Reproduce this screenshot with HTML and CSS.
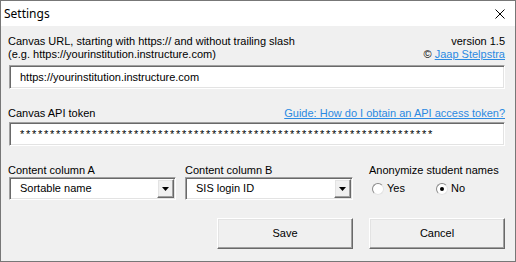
FILE: index.html
```html
<!doctype html>
<html>
<head>
  <meta charset="utf-8">
  <title>Settings</title>
  <link rel="stylesheet" href="styles.css">
</head>
<body>
  <div class="window">
    <div class="titlebar">
      <span class="title">Settings</span>
      <svg class="close" width="10" height="10" viewBox="0 0 10 10">
        <path d="M0.5 0.5 L9.5 9.5 M9.5 0.5 L0.5 9.5" stroke="#000" stroke-width="1" fill="none"/>
      </svg>
    </div>

    <div class="client">
      <!-- Canvas URL -->
      <div class="head">
        <div>Canvas URL, starting with https:// and without trailing slash<br>(e.g. https://yourinstitution.instructure.com)</div>
        <div class="right">version 1.5<br>© <a class="link" href="#">Jaap Stelpstra</a></div>
      </div>
      <div class="field url">https://yourinstitution.instructure.com</div>

      <!-- API token -->
      <div class="head token-head">
        <span>Canvas API token</span>
        <a class="link" href="#">Guide: How do I obtain an API access token?</a>
      </div>
      <div class="field token">*********************************************************************</div>

      <!-- Options -->
      <div class="options">
        <div class="col col-a">
          <div class="label">Content column A</div>
          <div class="combo"><span>Sortable name</span><span class="drop"><svg width="7" height="4" viewBox="0 0 7 4"><polygon points="0,0 7,0 3.5,4" fill="#000"/></svg></span></div>
        </div>
        <div class="col col-b">
          <div class="label">Content column B</div>
          <div class="combo"><span>SIS login ID</span><span class="drop"><svg width="7" height="4" viewBox="0 0 7 4"><polygon points="0,0 7,0 3.5,4" fill="#000"/></svg></span></div>
        </div>
        <div class="col anon">
          <div class="label">Anonymize student names</div>
          <div class="radios">
            <label class="radio"><span class="circle"></span>Yes</label>
            <label class="radio"><span class="circle checked"></span>No</label>
          </div>
        </div>
      </div>

      <div class="buttons">
        <button class="btn">Save</button>
        <button class="btn">Cancel</button>
      </div>
    </div>
  </div>
</body>
</html>
```

FILE: styles.css
```css
body {
  margin: 0;
  background: #fff;
}
.window {
  width: 516px;
  height: 262px;
  box-sizing: border-box;
  border: 1px solid #777;
  background: #f0f0f0;
  display: flex;
  flex-direction: column;
  font: 11px/13px "Liberation Sans", Arial, sans-serif;
  color: #000;
}
.titlebar {
  height: 25px;
  flex: none;
  background: #fff;
  display: flex;
  align-items: center;
  justify-content: space-between;
  padding: 0 10px 0 3px;
}
.title {
  font: 12px/16px "Noto Sans", sans-serif;
}
.close {
  display: block;
}
.client {
  flex: 1;
  padding: 9px 10px 0 7px;
  display: flex;
  flex-direction: column;
}
.head {
  display: flex;
  justify-content: space-between;
  align-items: flex-start;
}
.right {
  text-align: right;
}
.link {
  color: #2b8ae2;
  text-decoration: underline;
}
.field {
  margin: 4px 0 0 1px;
  height: 24px;
  box-sizing: border-box;
  background: #fff;
  border: 1px solid;
  border-color: #a0a0a0 #fff #fff #a0a0a0;
  box-shadow: inset 1px 1px #696969, inset -1px -1px #e3e3e3;
  padding: 0 10px;
  display: flex;
  align-items: center;
  white-space: nowrap;
  overflow: hidden;
}
.token-head {
  margin-top: 18px;
}
.token {
  margin-top: 2px;
  letter-spacing: 1.72px;
}
.options {
  display: flex;
  margin-top: 18px;
}
.col-a {
  width: 168px;
}
.col-b {
  width: 168px;
  margin-left: 9px;
}
.anon {
  margin-left: 16px;
}
.combo {
  height: 23px;
  box-sizing: border-box;
  background: #fff;
  border: 1px solid;
  border-color: #a0a0a0 #fff #fff #a0a0a0;
  box-shadow: inset 1px 1px #696969, inset -1px -1px #e3e3e3;
  padding: 1px 1px 1px 10px;
  display: flex;
  align-items: center;
  justify-content: space-between;
}
.col-a .combo {
  margin-left: 1px;
}
.drop {
  width: 17px;
  height: 19px;
  box-sizing: border-box;
  background: #f0f0f0;
  border: 1px solid;
  border-color: #fff #696969 #696969 #fff;
  box-shadow: inset -1px -1px #a0a0a0, inset 1px 1px #e3e3e3;
  display: flex;
  align-items: center;
  justify-content: center;
}
.drop svg {
  display: block;
}
.radios {
  display: flex;
  align-items: center;
  height: 23px;
  margin-left: 3px;
}
.radio {
  width: 64px;
  display: flex;
  align-items: center;
  gap: 3px;
}
.circle {
  width: 12px;
  height: 12px;
  box-sizing: border-box;
  border-radius: 50%;
  background: #fff;
  border: 1px solid;
  border-color: #8a8a8a #e3e3e3 #e3e3e3 #8a8a8a;
  display: flex;
  align-items: center;
  justify-content: center;
}
.circle.checked::after {
  content: "";
  width: 4px;
  height: 4px;
  border-radius: 50%;
  background: #000;
}
.buttons {
  display: flex;
  justify-content: flex-end;
  gap: 16px;
  margin-top: 18px;
}
.btn {
  width: 136px;
  height: 31px;
  box-sizing: border-box;
  font: inherit;
  color: #000;
  background: #f0f0f0;
  border: 1px solid;
  border-color: #fff #696969 #696969 #fff;
  box-shadow: inset -1px -1px #a0a0a0, inset 1px 1px #e3e3e3;
  padding: 0;
}
```
